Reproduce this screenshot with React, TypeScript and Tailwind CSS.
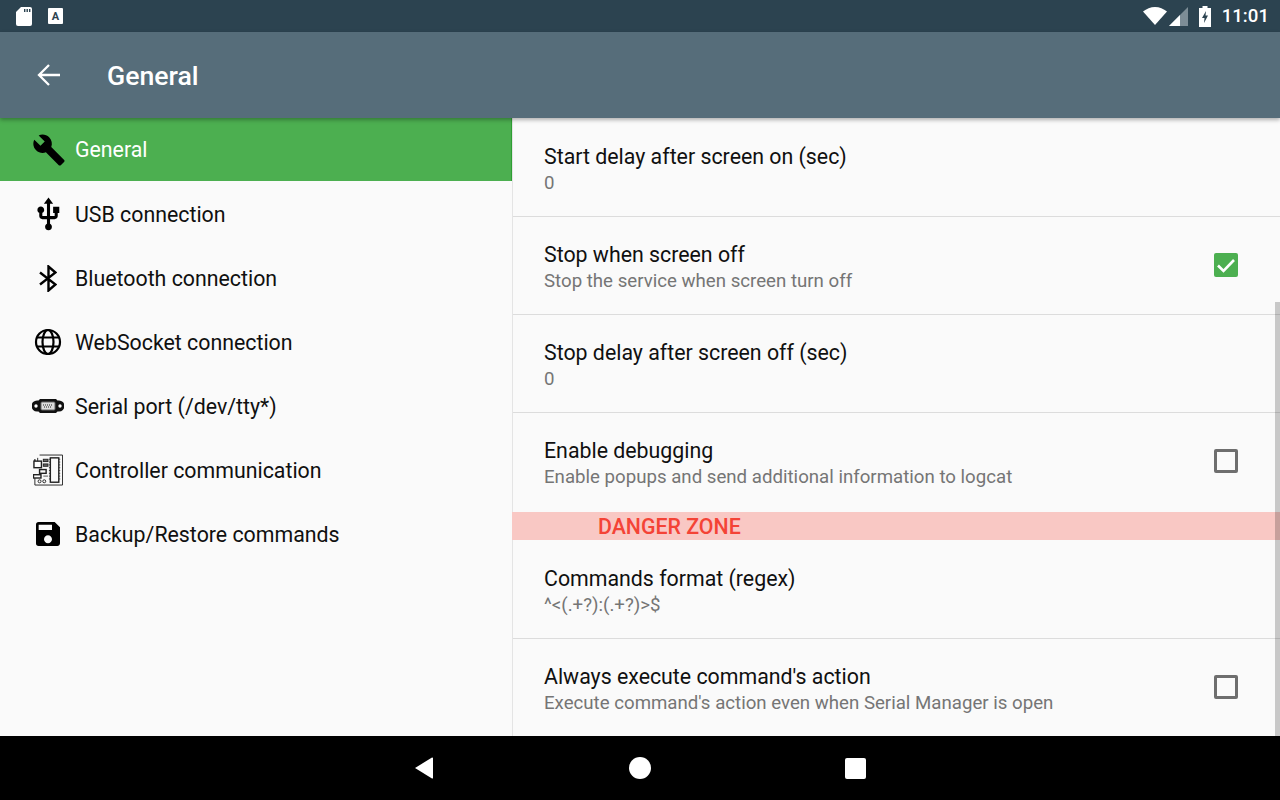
import { MdBuild, MdSave, MdUsb } from "react-icons/md";

function BluetoothIcon() {
  return (
    <svg viewBox="0 0 18 27" className="h-[27px] w-[18px]" fill="none" stroke="#000" strokeWidth="2.4">
      <path d="M1 7.500l15.500 12-7 6V1.500l7 6L1 19.500" />
    </svg>
  );
}

function GlobeIcon() {
  return (
    <svg viewBox="0 0 28 28" className="h-7 w-7" fill="none" stroke="#000" strokeWidth="2.2">
      <circle cx="14" cy="14" r="12" />
      <ellipse cx="14" cy="14" rx="5.5" ry="12" />
      <path d="M3 9.500h22M3 18.500h22" />
    </svg>
  );
}

function SerialIcon() {
  return (
    <svg viewBox="0 0 32 14" className="h-[14px] w-8">
      <path d="M5 1.500h1.500L8 0h16l1.500 1.500H27a5 5 0 0 1 0 11h-1.500L24 14H8l-1.500-1.500H5a5 5 0 0 1 0-11z" fill="#111" />
      <circle cx="4" cy="7" r="1.7" fill="#fff" />
      <circle cx="28" cy="7" r="1.7" fill="#fff" />
      <rect x="9" y="3" width="14" height="8" rx="1" fill="#ddd" stroke="#666" />
      <path d="M11 6h10M12 8h8" stroke="#222" strokeDasharray="1 1" />
    </svg>
  );
}

function BoardIcon() {
  return (
    <svg viewBox="0 0 32 34" className="h-[33px] w-[30px]" fill="none" stroke="#222" strokeWidth="1">
      <path d="M7 .5h24.500v32H2v-9M2 14V5z" />
      <rect x="18.500" y="3.500" width="9" height="26" strokeWidth="1.500" />
      <path d="M17 5h1M17 8h1M17 11h1M17 14h1M17 17h1M17 20h1M17 23h1M17 26h1M28 5h1M28 8h1M28 11h1M28 14h1M28 17h1M28 20h1M28 23h1M28 26h1" />
      <rect x="1" y="7" width="8" height="7" strokeWidth="1.500" fill="#fff" />
      <rect x="11" y="5" width="5" height="2.500" fill="#666" />
      <rect x="11" y="10" width="5" height="2.500" fill="#666" />
      <rect x="7" y="16" width="7" height="4" strokeWidth="1.500" />
      <rect x="0.500" y="21.500" width="8" height="3.500" strokeWidth="1.500" fill="#fff" />
      <path d="M11 23h5" strokeWidth="1.500" stroke="#888" />
      <circle cx="7" cy="28.500" r="1.600" />
      <circle cx="12" cy="28.500" r="1.600" />
      <path d="M5 7V3.500" />
    </svg>
  );
}

const menu = [
  { label: "General", icon: <MdBuild className="ml-0.5 h-[34px] w-[34px] text-black" />, active: true },
  { label: "USB connection", icon: <MdUsb className="h-[37px] w-[37px] text-black" /> },
  { label: "Bluetooth connection", icon: <BluetoothIcon /> },
  { label: "WebSocket connection", icon: <GlobeIcon /> },
  { label: "Serial port (/dev/tty*)", icon: <SerialIcon /> },
  { label: "Controller communication", icon: <BoardIcon /> },
  { label: "Backup/Restore commands", icon: <MdSave className="h-8 w-8 text-black" /> },
];

function Checkbox({ checked, className = "" }: { checked: boolean; className?: string }) {
  if (checked) {
    return (
      <div className={`flex h-6 w-6 items-center justify-center rounded-[2px] bg-[#4caf50] ${className}`}>
        <svg viewBox="0 0 24 24" className="h-6 w-6" fill="none" stroke="#fff" strokeWidth="2.6">
          <path d="M4 12.500l5.500 5.500 10.500-11" />
        </svg>
      </div>
    );
  }
  return <div className={`h-6 w-6 rounded-[2px] border-[3px] border-[#6e6e6e] ${className}`} />;
}

type RowProps = {
  title: string;
  sub: string;
  check?: boolean;
  border?: boolean;
  height: string;
  textPad: string;
  checkClass?: string;
};

function SettingRow({ title, sub, check, border = true, height, textPad, checkClass }: RowProps) {
  return (
    <div className={`flex items-center justify-between pl-[31px] pr-[42px] ${height} ${border ? "border-b border-[#dcdcdc]" : ""}`}>
      <div className={textPad}>
        <div className="text-[21.33px] leading-[27px] text-[#101010]">{title}</div>
        <div className="text-[18.67px] leading-[27px] text-[#757575]">{sub}</div>
      </div>
      {check !== undefined && <Checkbox checked={check} className={checkClass} />}
    </div>
  );
}

export default function App() {
  return (
    <div className="flex h-[800px] w-[1280px] flex-col overflow-hidden bg-[#fafafa] font-['Roboto',sans-serif]">
      {/* Status bar */}
      <div className="flex h-8 items-center justify-between bg-[#2c4350] pl-4 pr-[11px]">
        <div className="flex items-center gap-4">
          <svg viewBox="0 0 16 19" className="h-[19px] w-4">
            <path d="M5 0h9a2 2 0 0 1 2 2v15a2 2 0 0 1-2 2H2a2 2 0 0 1-2-2V5z" fill="#fff" />
            <path d="M8 2h1.400v3H8zM10.500 2h1.400v3h-1.400zM13 2h1.400v3H13z" fill="#2c4350" />
          </svg>
          <div className="flex h-4 w-[15px] items-center justify-center rounded-[1px] bg-white text-[11px] font-bold leading-none text-[#2c4350]">A</div>
        </div>
        <div className="flex items-center">
          <svg viewBox="0 0 24 18" className="h-[18px] w-6">
            <path d="M12 18L0 4.500C3.500 1.800 7.500 0 12 0s8.500 1.800 12 4.500z" fill="#fff" />
          </svg>
          <svg viewBox="0 0 19 19" className="ml-0.5 h-[19px] w-[19px]">
            <path d="M19 0v19H0z" fill="#7d8d96" />
            <path d="M11 8v11H0z" fill="#fff" />
          </svg>
          <svg viewBox="0 0 12 21" className="ml-[11px] h-[21px] w-3">
            <path d="M3.500 0h5v2H12v19H0V2h3.500z" fill="#fff" />
            <path d="M7 5L3 12h2.500L5 17l4-7.500H6.500z" fill="#2c4350" />
          </svg>
          <span className="ml-[11px] text-[18.67px] font-medium leading-none text-white">11:01</span>
        </div>
      </div>

      {/* App bar */}
      <div className="relative z-10 flex h-[86px] items-center bg-[#566d7a] pl-[37px] shadow-[0_2px_4px_rgba(0,0,0,0.3)]">
        <svg viewBox="0 0 23 22" className="h-[22px] w-[23px]" fill="none" stroke="#fff" strokeWidth="2.300">
          <path d="M23 11H2M12 1L2 11l10 10" />
        </svg>
        <h1 className="ml-[47px] pt-0.5 text-[26.67px] font-medium text-white">General</h1>
      </div>

      {/* Main content */}
      <div className="flex flex-1 overflow-hidden">
        <div className="w-[512px] shrink-0">
          {menu.map((item) => (
            <div
              key={item.label}
              className={`flex items-center ${item.active ? "mb-px h-[63px] border-r border-[#2f9e34] bg-[#4caf50] text-white" : "h-16 text-[#101010]"}`}
            >
              <div className="flex w-[75px] shrink-0 justify-center pl-[21px]">{item.icon}</div>
              <span className="pt-px text-[21.33px]">{item.label}</span>
            </div>
          ))}
        </div>

        <div className="relative flex-1 border-l border-[#e4e4e4]">
          <SettingRow title="Start delay after screen on (sec)" sub="0" height="h-[99px]" textPad="pt-1.5" />
          <SettingRow title="Stop when screen off" sub="Stop the service when screen turn off" check={true} height="h-[98px]" textPad="pt-1" checkClass="-mt-0.5" />
          <SettingRow title="Stop delay after screen off (sec)" sub="0" height="h-[98px]" textPad="pt-1" />
          <SettingRow title="Enable debugging" sub="Enable popups and send additional information to logcat" check={false} border={false} height="h-[99px]" textPad="pt-0.5" checkClass="-mt-1" />
          <div className="-ml-px flex h-7 items-center bg-[#f9c8c4] pl-[86px] pt-0.5 text-[21.33px] font-medium text-[#f44336]">DANGER ZONE</div>
          <SettingRow title="Commands format (regex)" sub="^<(.+?):(.+?)>$" height="h-[99px]" textPad="pt-1.5" />
          <SettingRow title="Always execute command's action" sub="Execute command's action even when Serial Manager is open" check={false} border={false} height="h-[97px]" textPad="pt-1" checkClass="-mt-0.5" />
          {/* Scrollbar */}
          <div className="absolute bottom-0 right-0 top-[184px] w-[5px] bg-black/20" />
        </div>
      </div>

      {/* Nav bar */}
      <div className="flex h-16 items-center bg-black pl-[414px]">
        <svg viewBox="0 0 20 22" className="h-[22px] w-5">
          <path d="M19 1v20a.8.8 0 0 1-1 .5L1 11 18 .5a.8.8 0 0 1 1 .5z" fill="#fff" />
        </svg>
        <div className="ml-[195px] h-[22px] w-[22px] rounded-full bg-white" />
        <div className="ml-[194px] h-[21px] w-[21px] rounded-[2px] bg-white" />
      </div>
    </div>
  );
}
